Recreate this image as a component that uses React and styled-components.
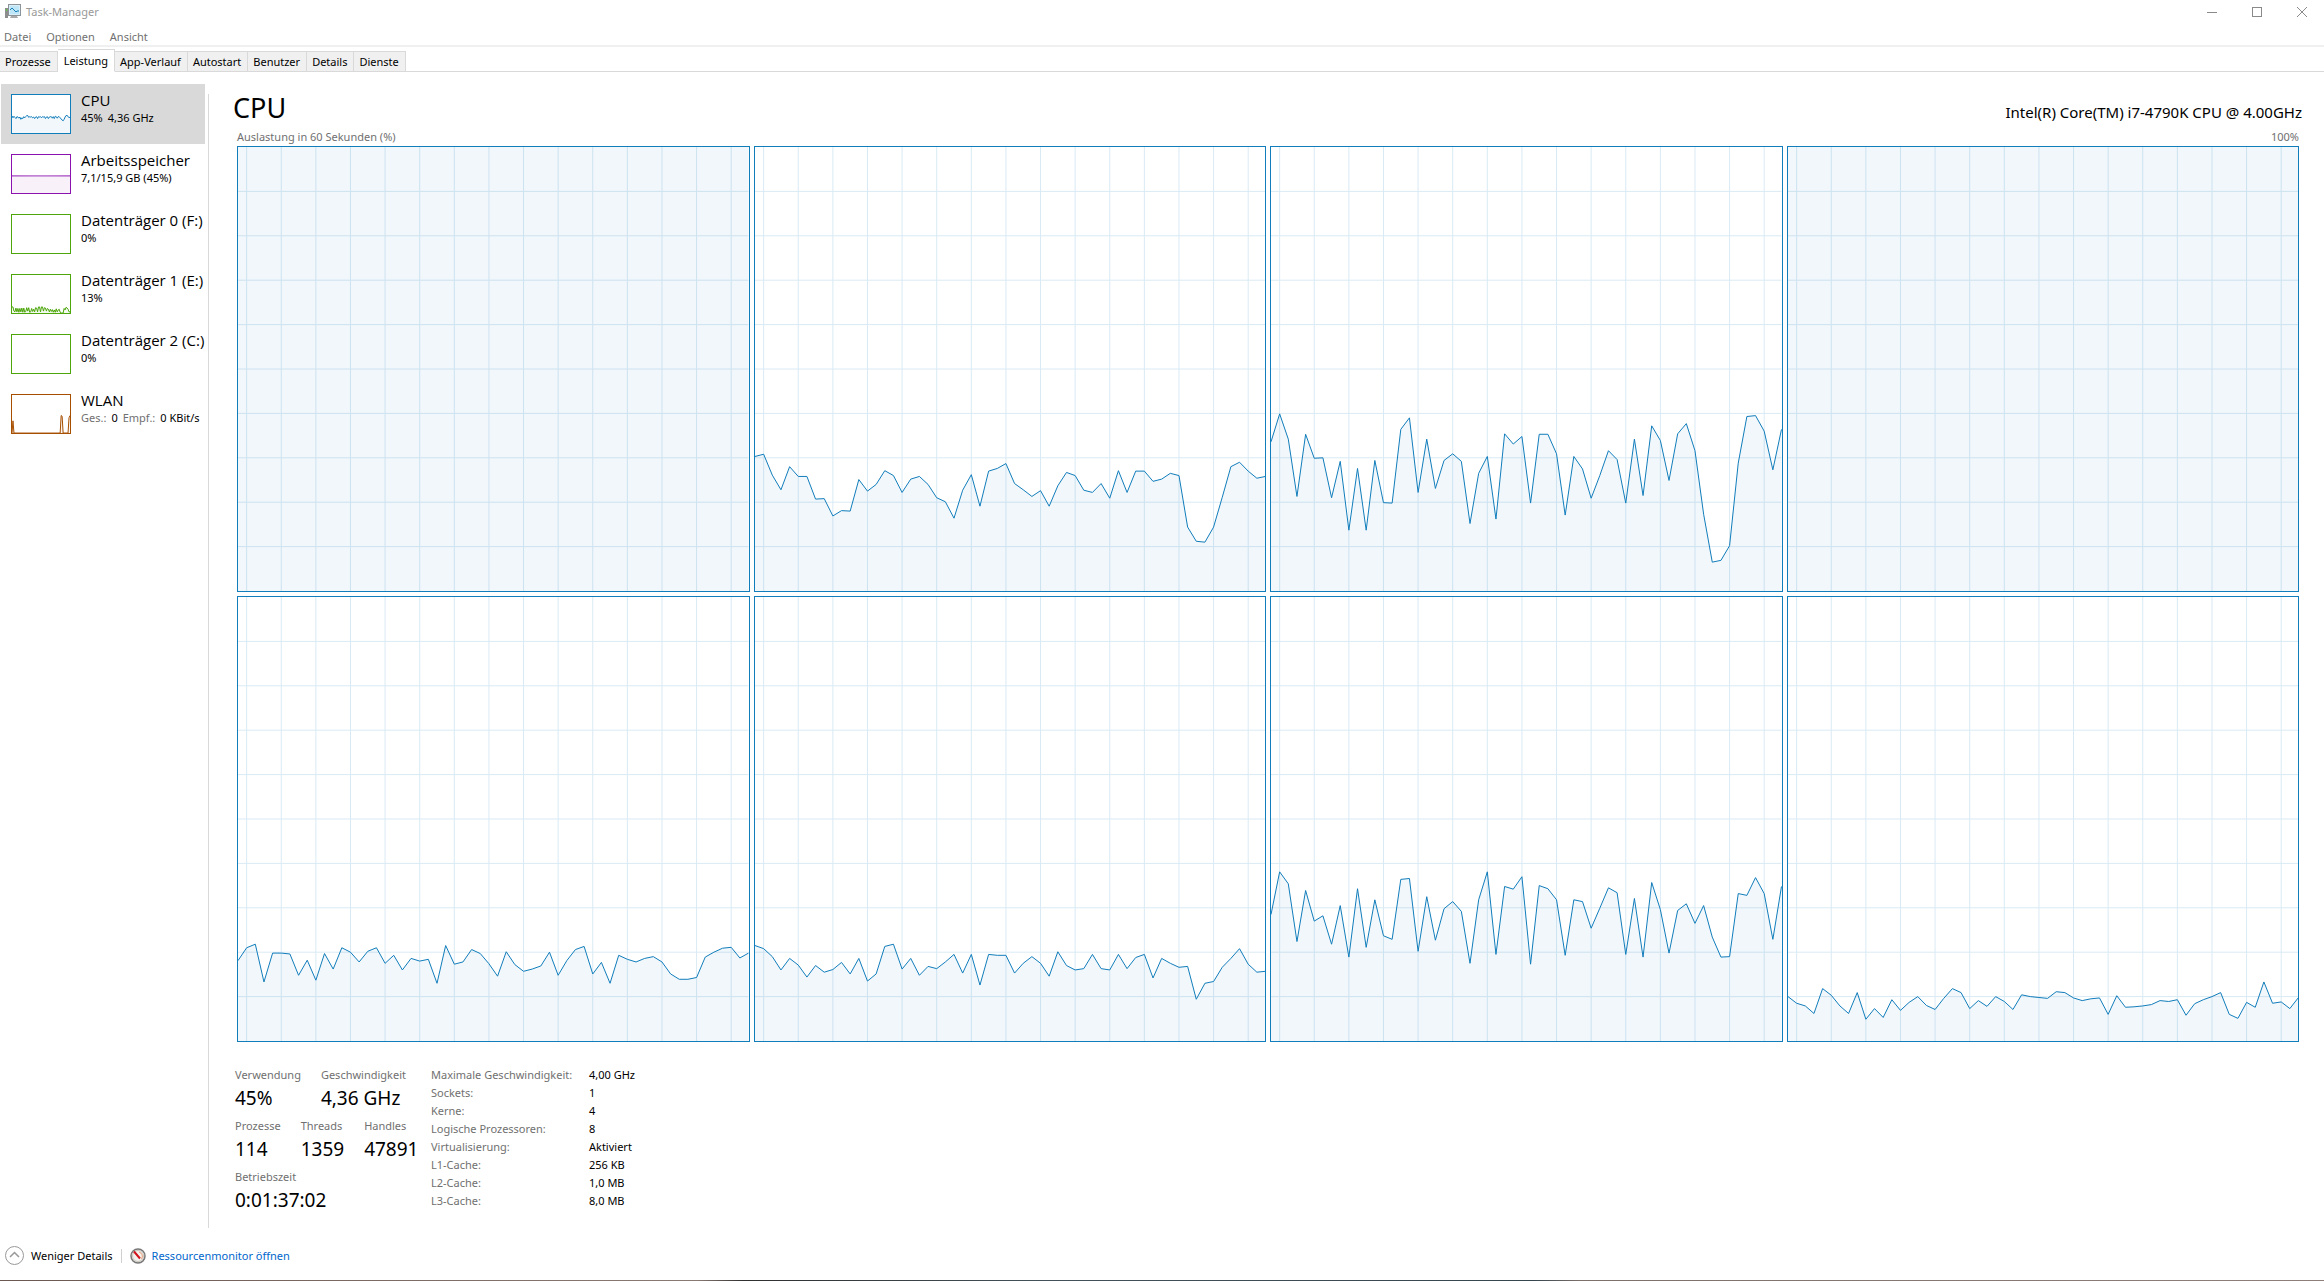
import React, { useState } from 'react';
import styled, { createGlobalStyle, css } from 'styled-components';

const GlobalStyle = createGlobalStyle`
  body {
    margin: 0;
    background: #fff;
    color: #000;
    font-family: 'Noto Sans', 'Open Sans', sans-serif;
    font-size: 11px;
    line-height: 18px;
  }
  button {
    font: inherit;
    color: inherit;
    border: 0;
    padding: 0;
    background: none;
    text-align: left;
  }
`;

const BLUE = '#117dbb';
const PURPLE = '#8b12ae';
const GREEN = '#4da60c';
const BROWN = '#a74f01';

const Window = styled.div`
  display: flex;
  flex-direction: column;
  min-height: 100vh;
`;

const TitleBar = styled.header`
  display: flex;
  align-items: center;
  height: 23px;
  padding-left: 5px;
  color: #999;
`;

const Title = styled.span`
  flex: 1;
  margin-left: 5px;
`;

const WindowButton = styled.button`
  display: flex;
  align-items: center;
  justify-content: center;
  width: 45px;
  height: 22px;
`;

const MenuBar = styled.nav`
  display: flex;
  gap: 15px;
  height: 22px;
  padding: 0 4px;
  border-bottom: 2px solid #f0f0f0;
  color: #707070;
  line-height: 28px;
`;

const Tabs = styled.div`
  display: flex;
  align-items: flex-end;
  height: 25px;
  box-shadow: inset 0 -1px #d9d9d9;
`;

const Tab = styled.button`
  box-sizing: border-box;
  height: 21px;
  padding: 0 6px 0 5px;
  border: 1px solid #d9d9d9;
  border-left-width: 0;
  background: #f0f0f0;
  line-height: 20px;
  ${p => p.$active && css`
    height: 23px;
    padding: 0 6px;
    border-bottom-color: #fff;
    background: #fff;
  `}
`;

const Body = styled.div`
  display: flex;
  flex: 1;
`;

const Sidebar = styled.aside`
  flex: 0 0 204px;
  min-width: 0;
  padding: 12px 3px 0 1px;
`;

const SidebarItem = styled.button`
  display: flex;
  align-items: flex-start;
  box-sizing: border-box;
  width: 100%;
  height: 60px;
  padding: 10px 0 0 10px;
  background: ${p => (p.$active ? '#d9d9d9' : 'transparent')};
  white-space: nowrap;
`;

const Thumb = styled.span`
  flex: 0 0 58px;
  height: 38px;
  margin-right: 10px;
  border: 1px solid ${p => p.$color};
  background: #fff;
`;

const ItemText = styled.span`
  display: flex;
  flex-direction: column;
  margin-top: -2px;
`;

const ItemName = styled.span`
  font-family: 'Open Sans', 'Noto Sans', sans-serif;
  font-size: 15px;
  line-height: 17px;
`;

const ItemInfo = styled.span`
  display: flex;
  gap: 5px;
`;

const Muted = styled.span`
  color: #707070;
`;

const Main = styled.main`
  display: flex;
  flex: 1;
  flex-direction: column;
  min-width: 0;
  margin-top: 22px;
  padding: 0 25px 0 28px;
  border-left: 1px solid #d9d9d9;
`;

const Header = styled.div`
  display: flex;
  justify-content: space-between;
  align-items: baseline;
  margin: 0 -3px 6px -4px;
`;

const Heading = styled.h1`
  margin: 0;
  font-size: 27px;
  font-weight: 400;
  line-height: 28px;
`;

const Model = styled.span`
  font-size: 15px;
`;

const AxisLabels = styled.div`
  display: flex;
  justify-content: space-between;
  color: #707070;
`;

const Charts = styled.div`
  display: grid;
  flex: 1;
  grid-template-columns: repeat(4, 1fr);
  grid-template-rows: repeat(2, 1fr);
  gap: 4px;
`;

const ChartBox = styled.div`
  contain: size;
  min-height: 100px;
  border: 1px solid ${BLUE};
`;

const Plot = styled.svg`
  display: block;
  width: 100%;
  height: 100%;
`;

const Stats = styled.div`
  display: flex;
  height: 186px;
  padding-top: 24px;
  box-sizing: border-box;
  margin-left: -2px;
`;

const StatColumn = styled.div`
  width: 196px;
`;

const StatRow = styled.dl`
  display: flex;
  gap: 20px;
  margin: 0 0 5px;
`;

const Stat = styled.div`
  dt {
    color: #707070;
  }
  dd {
    margin: 0;
    font-size: 19px;
    line-height: 28px;
  }
`;

const Details = styled.table`
  align-self: flex-start;
  border-collapse: collapse;
  th,
  td {
    padding: 0;
    font-weight: 400;
    text-align: left;
  }
  th {
    width: 158px;
    color: #707070;
  }
`;

const Footer = styled.footer`
  display: flex;
  align-items: center;
  box-sizing: border-box;
  height: 52px;
  padding: 3px 0 0 5px;
`;

const BottomEdge = styled.div`
  height: 1px;
  background: linear-gradient(90deg, #6b5850, #8a7a74 30%, #2f2f2f 32%, #43525a 45%, #36464f 66%, #7d706b 68%, #8f7f7a);
`;

const LessButton = styled.button`
  display: flex;
  align-items: center;
  gap: 7px;
  padding-right: 8px;
`;

const ResourceLink = styled.a`
  display: flex;
  align-items: center;
  gap: 6px;
  padding-left: 8px;
  color: #0066cc;
  text-decoration: none;
`;

const Separator = styled.span`
  width: 1px;
  height: 14px;
  background: #d0d0d0;
`;

// Load of every logical processor in percent, one sample per second.
const full = Array(60).fill(100);
const cores = [
  full,
  [
    30.3, 30.8, 26.1, 22.8, 28, 25.8, 25.8, 20.7, 20.8, 16.9, 18.1, 18, 25.1, 22.5, 24, 27.1, 26, 22.2, 25.2, 25.8,
    24, 21, 20.1, 16.4, 22.7, 26.2, 19.1, 27, 27.6, 28.7, 24.2, 22.8, 21.3, 22.6, 19.1, 23.7, 26.7, 26, 22.7, 22.2,
    24.2, 20.9, 27.1, 22.2, 27, 27, 24.7, 25.2, 26.5, 26, 14.4, 11.2, 11, 14.4, 21.1, 28, 29, 27, 25.4, 25.8
  ],
  [
    33.6, 39.9, 34.2, 21.3, 35.3, 29.9, 30, 21, 29.2, 13.7, 27.6, 13.7, 29.4, 19.9, 19.8, 36.4, 39, 22.2, 34.2, 23.1,
    29.4, 30.9, 29.2, 15.2, 26.5, 30.3, 16.2, 35.4, 33.1, 34.8, 19.8, 35.3, 35.3, 30.9, 17.1, 30.3, 27.5, 20.9, 26, 31.6,
    29.6, 19.8, 34.2, 21.5, 37.2, 33.9, 24.9, 35.4, 37.7, 31.6, 17.3, 6.5, 6.9, 10.2, 28.8, 39.3, 39.5, 36, 27.3, 36.4
  ],
  full,
  [
    18.1, 21, 21.8, 13.3, 19.8, 19.8, 19.6, 14.8, 18.2, 13.7, 19.7, 16.2, 21, 20, 17.8, 20.2, 21, 17.5, 19.3, 16,
    18.6, 18, 18.4, 13, 21.5, 17.3, 17.8, 20.6, 19.7, 17.4, 14.6, 20.1, 17.2, 15.7, 16.2, 16.9, 20, 14.8, 18.1, 20.6,
    21.3, 15.1, 17.7, 13, 19.3, 18.4, 17.8, 18.6, 19, 17.8, 15.1, 13.9, 13.9, 14.3, 18.9, 20, 20.9, 21.1, 18.7, 19.8
  ],
  [
    21.5, 20.8, 19, 16, 18.6, 17.1, 14.4, 17, 15.5, 16.1, 17.7, 15.1, 18.6, 13.5, 15.1, 21.3, 21.8, 16.2, 18.6, 14.8,
    16.8, 16.3, 17.8, 19.5, 15.3, 19.5, 12.6, 19.5, 19.3, 19.3, 15.3, 17.5, 19, 17.5, 14.6, 20.1, 17, 16, 16.3, 19.5,
    16.3, 16, 19.5, 16.3, 18.8, 19.5, 14.2, 18.6, 17.5, 16.6, 16.8, 9.4, 13, 13.4, 16.6, 18.6, 20.8, 17.3, 15.5, 15.7
  ],
  [
    28.5, 38.1, 35.4, 22.4, 33.9, 27, 28.2, 21.8, 30.5, 18.9, 34.3, 21.1, 31.8, 23.7, 22.9, 36.4, 36.6, 20.2, 32.5, 22.7,
    29.8, 31.4, 29.2, 17.5, 31.8, 38.1, 19.5, 34.8, 34.2, 37, 17.3, 35, 34.3, 31.8, 19.3, 31.8, 31.4, 25.4, 29.9, 34.5,
    33.4, 19.5, 32.1, 18.9, 35.7, 29.6, 19.8, 29.4, 30.9, 26.5, 30.5, 23.4, 18.9, 19, 33.2, 32.8, 36.8, 33.2, 22.9, 34.8
  ],
  [
    10, 8.5, 7.9, 6.2, 11.8, 10.3, 7.9, 6.2, 10.9, 4.9, 7.3, 5.3, 9.3, 6.9, 8.7, 10, 8, 7.1, 9.6, 11.8,
    10.9, 7.3, 9.1, 7.8, 10, 8.9, 7.1, 10.4, 10, 9.8, 9.6, 11.1, 10.9, 9.7, 9.1, 9.5, 9.7, 6, 10.2, 7.6,
    7.7, 7.9, 8.2, 9.1, 8.9, 9.3, 5.8, 8.4, 9.3, 10, 10.9, 6, 5.1, 8.7, 7.6, 13.3, 8.5, 8.8, 7.3, 9.8
  ]
];

const total = [
  45, 40, 44, 41, 38, 43, 42, 39, 42, 36, 40, 38, 43, 40, 43, 46, 46, 41, 43, 42,
  43, 40, 42, 38, 42, 43, 38, 43, 42, 43, 40, 43, 42, 43, 38, 42, 43, 38, 42, 43,
  43, 39, 43, 38, 44, 43, 39, 43, 43, 40, 37, 34, 32, 36, 42, 46, 46, 44, 40, 42
];
const diskLoad = [
  16, 16, 5, 3, 13, 3, 12, 2, 12, 3, 13, 2, 13, 2, 4, 14, 5, 14, 2, 3,
  12, 4, 10, 3, 14, 13, 3, 16, 16, 3, 16, 16, 5, 14, 13, 5, 12, 10, 3, 10,
  4, 9, 2, 8, 2, 11, 3, 8, 10, 2, 0, 0, 0, 12, 8, 15, 13, 10, 3, 3
];
const wlanLoad = [0, 32, 0, ...Array(46).fill(0), 0, 46, 44, 0, 0, 0, 0, 0, 0, 40, 46];

const resources = [
  { name: 'CPU', info: <><span>45%</span><span>4,36 GHz</span></>, color: BLUE, values: total },
  { name: 'Arbeitsspeicher', info: '7,1/15,9 GB (45%)', color: PURPLE, values: Array(60).fill(45) },
  { name: 'Datenträger 0 (F:)', info: '0%', color: GREEN },
  { name: 'Datenträger 1 (E:)', info: '13%', color: GREEN, values: diskLoad },
  { name: 'Datenträger 2 (C:)', info: '0%', color: GREEN },
  {
    name: 'WLAN',
    info: <><Muted>Ges.:</Muted><span>0</span><Muted>Empf.:</Muted><span>0 KBit/s</span></>,
    color: BROWN,
    values: wlanLoad
  }
];

const tabs = ['Prozesse', 'Leistung', 'App-Verlauf', 'Autostart', 'Benutzer', 'Details', 'Dienste'];

const stats = [
  [['Verwendung', '45%'], ['Geschwindigkeit', '4,36 GHz']],
  [['Prozesse', '114'], ['Threads', '1359'], ['Handles', '47891']],
  [['Betriebszeit', '0:01:37:02']]
];

const details = [
  ['Maximale Geschwindigkeit:', '4,00 GHz'],
  ['Sockets:', '1'],
  ['Kerne:', '4'],
  ['Logische Prozessoren:', '8'],
  ['Virtualisierung:', 'Aktiviert'],
  ['L1-Cache:', '256 KB'],
  ['L2-Cache:', '1,0 MB'],
  ['L3-Cache:', '8,0 MB']
];

const Graph = ({ values, color, grid }) => {
  const last = values.length - 1;
  const points = values.map((v, i) => `${i},${100 - v}`).join(' ');
  return (
    <Plot viewBox={`0 0 ${last} 100`} preserveAspectRatio="none" aria-hidden="true">
      {grid && (
        <g stroke="#d9eaf4" shapeRendering="crispEdges">
          {Array.from({ length: 15 }, (_, i) => (
            <line key={i} x1={1 + i * 4} x2={1 + i * 4} y1="0" y2="100" vectorEffect="non-scaling-stroke" />
          ))}
          {Array.from({ length: 9 }, (_, i) => (
            <line key={i} x1="0" x2={last} y1={10 + i * 10} y2={10 + i * 10} vectorEffect="non-scaling-stroke" />
          ))}
        </g>
      )}
      <polygon points={`0,100 ${points} ${last},100`} fill={color} fillOpacity="0.06" />
      {values[0] < 100 && (
        <polyline points={points} fill="none" stroke={color} vectorEffect="non-scaling-stroke" />
      )}
    </Plot>
  );
};

const AppIcon = () => (
  <svg width="16" height="16" viewBox="0 0 16 16" aria-hidden="true">
    <rect x="0" y="4" width="3" height="10" fill="#8d8d8d" />
    <rect x="1" y="5" width="1" height="2" fill="#5fd13b" />
    <path d="M6 12h6l1 2H5z" fill="#a9a9a9" />
    <rect x="3.5" y="0.5" width="12" height="11" fill="#d8eef8" stroke="#8d9499" />
    <rect x="5" y="2" width="9" height="8" fill="#bfe6f7" />
    <path d="M5 6l2-2 2 2 2 2 1-1 2 0" fill="none" stroke="#1b7fb8" />
  </svg>
);

const GaugeIcon = () => (
  <svg width="16" height="16" viewBox="0 0 16 16" aria-hidden="true">
    <circle cx="8" cy="8" r="7" fill="#f4f2ee" stroke="#777" strokeWidth="1.5" />
    <circle cx="8" cy="8" r="5.5" fill="none" stroke="#c9c5bd" />
    <path d="M9 4a4.500 4.500 0 0 1 2.500 7" fill="none" stroke="#e9a27a" />
    <path d="M4 3.500l6 7" stroke="#d1121b" strokeWidth="2" />
  </svg>
);

const App = () => {
  const [tab, setTab] = useState('Leistung');
  const [resource, setResource] = useState('CPU');

  return (
    <Window>
      <GlobalStyle />
      <TitleBar>
        <AppIcon />
        <Title>Task-Manager</Title>
        <WindowButton aria-label="Minimieren">
          <svg width="10" height="10"><path d="M0 5.500h10" stroke="#8a8a8a" /></svg>
        </WindowButton>
        <WindowButton aria-label="Maximieren">
          <svg width="10" height="10"><rect x="0.500" y="0.500" width="9" height="9" fill="none" stroke="#8a8a8a" /></svg>
        </WindowButton>
        <WindowButton aria-label="Schließen">
          <svg width="10" height="10"><path d="M0 0l10 10M10 0L0 10" stroke="#8a8a8a" /></svg>
        </WindowButton>
      </TitleBar>
      <MenuBar>
        <button>Datei</button>
        <button>Optionen</button>
        <button>Ansicht</button>
      </MenuBar>
      <Tabs role="tablist">
        {tabs.map(t => (
          <Tab key={t} role="tab" aria-selected={t === tab} $active={t === tab} onClick={() => setTab(t)}>
            {t}
          </Tab>
        ))}
      </Tabs>
      <Body>
        <Sidebar>
          {resources.map(r => (
            <SidebarItem key={r.name} $active={r.name === resource} onClick={() => setResource(r.name)}>
              <Thumb $color={r.color}>
                {r.values && <Graph values={r.values} color={r.color} />}
              </Thumb>
              <ItemText>
                <ItemName>{r.name}</ItemName>
                <ItemInfo>{r.info}</ItemInfo>
              </ItemText>
            </SidebarItem>
          ))}
        </Sidebar>
        <Main>
          <Header>
            <Heading>CPU</Heading>
            <Model>Intel(R) Core(TM) i7-4790K CPU @ 4.00GHz</Model>
          </Header>
          <AxisLabels>
            <span>Auslastung in 60 Sekunden (%)</span>
            <span>100%</span>
          </AxisLabels>
          <Charts>
            {cores.map((values, i) => (
              <ChartBox key={i}>
                <Graph values={values} color={BLUE} grid />
              </ChartBox>
            ))}
          </Charts>
          <Stats>
            <StatColumn>
              {stats.map((row, i) => (
                <StatRow key={i}>
                  {row.map(([label, value]) => (
                    <Stat key={label}>
                      <dt>{label}</dt>
                      <dd>{value}</dd>
                    </Stat>
                  ))}
                </StatRow>
              ))}
            </StatColumn>
            <Details>
              <tbody>
                {details.map(([label, value]) => (
                  <tr key={label}>
                    <th scope="row">{label}</th>
                    <td>{value}</td>
                  </tr>
                ))}
              </tbody>
            </Details>
          </Stats>
        </Main>
      </Body>
      <Footer>
        <LessButton>
          <svg width="19" height="19" viewBox="0 0 19 19" fill="none" stroke="#999">
            <circle cx="9.500" cy="9.500" r="9" />
            <path d="M5 11l4.500-4.500L14 11" strokeWidth="1.500" />
          </svg>
          Weniger Details
        </LessButton>
        <Separator />
        <ResourceLink href="#resmon">
          <GaugeIcon />
          Ressourcenmonitor öffnen
        </ResourceLink>
      </Footer>
      <BottomEdge />
    </Window>
  );
};

export default App;
